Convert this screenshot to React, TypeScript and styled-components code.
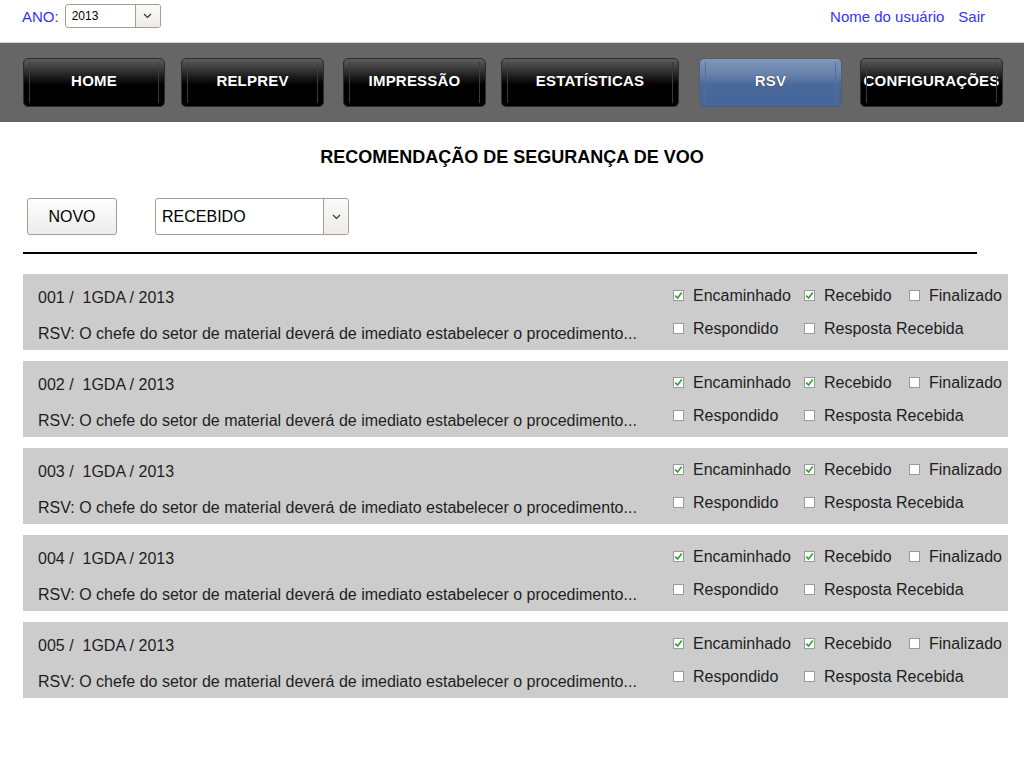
import React from 'react'
import styled, { createGlobalStyle } from 'styled-components'

const GlobalStyle = createGlobalStyle`
    body {
        margin: 0;
        background: #fff;
        font-family: "Liberation Sans", Arial, sans-serif;
    }
`

const menu = [
    { label: 'HOME', width: 142, gap: 0 },
    { label: 'RELPREV', width: 143, gap: 16 },
    { label: 'IMPRESSÃO', width: 143, gap: 19 },
    { label: 'ESTATÍSTICAS', width: 178, gap: 15 },
    { label: 'RSV', width: 143, gap: 20, active: true },
    { label: 'CONFIGURAÇÕES', width: 143, gap: 18 },
]

const records = ['001', '002', '003', '004', '005']

const Page = styled.div`
    width: 1024px;
    min-height: 768px;
`

const TopBar = styled.div`
    height: 42px;
    display: flex;
    align-items: center;
    justify-content: space-between;
    padding: 0 39px 0 22px;
    box-sizing: border-box;
    color: #3333ff;
    font-size: 15px;
`

const YearGroup = styled.div`
    display: flex;
    align-items: center;
    gap: 6px;
    margin-top: -10px;
`

const UserLinks = styled.div`
    display: flex;
    gap: 14px;
    margin-top: -10px;
`

const SelectBox = styled.div<{ $w: number; $h: number; $size: number }>`
    width: ${({ $w }) => $w}px;
    height: ${({ $h }) => $h}px;
    box-sizing: border-box;
    border: 1px solid #a59e92;
    border-radius: 3px;
    background: #fff;
    display: flex;
    color: #000;
    font-size: ${({ $size }) => $size}px;
    overflow: hidden;
`

const SelectValue = styled.div<{ $pad: number }>`
    flex: 1;
    display: flex;
    align-items: center;
    padding-left: ${({ $pad }) => $pad}px;
`

const SelectArrow = styled.div`
    width: 24px;
    border-left: 1px solid #a59e92;
    background: linear-gradient(#fbfaf8, #efece6);
    display: flex;
    align-items: center;
    justify-content: center;
`

const Nav = styled.nav`
    height: 80px;
    background: #666;
    border-top: 1px solid #d4d4d4;
    display: flex;
    align-items: flex-start;
    padding: 15px 0 0 23px;
    box-sizing: border-box;
`

const NavButton = styled.div<{ $w: number; $gap: number; $active?: boolean }>`
    position: relative;
    flex-shrink: 0;
    width: ${({ $w }) => $w}px;
    margin-left: ${({ $gap }) => $gap}px;
    height: 49px;
    box-sizing: border-box;
    border-radius: 5px;
    border: 1px solid ${({ $active }) => ($active ? '#555d6b' : '#2b2b2b')};
    background: ${({ $active }) =>
        $active
            ? 'linear-gradient(#8098bc 0%, #6580aa 35%, #49699b 55%, #46669a 100%)'
            : 'linear-gradient(#5c5c5c 0%, #2a2a2a 30%, #000 55%, #000 100%)'};
    color: #fff;
    font-weight: bold;
    font-size: 15px;
    letter-spacing: 0.2px;
    display: flex;
    justify-content: center;
    padding-top: 13px;
    text-shadow: 0 0 1px #000;
    white-space: nowrap;

    &::before,
    &::after {
        content: '';
        position: absolute;
        top: 3px;
        bottom: 3px;
        width: 1px;
        background: ${({ $active }) => ($active ? '#5a6f91' : '#3a3a3a')};
    }
    &::before { left: 5px; }
    &::after { right: 5px; }
`

const Title = styled.h1`
    margin: 25px 0 0;
    text-align: center;
    font-size: 18px;
    font-weight: bold;
    color: #000;
`

const Toolbar = styled.div`
    display: flex;
    align-items: center;
    gap: 38px;
    margin-top: 30px;
    padding-left: 27px;
`

const NewButton = styled.div`
    width: 90px;
    height: 37px;
    box-sizing: border-box;
    border: 1px solid #a59e92;
    border-radius: 3px;
    background: linear-gradient(#fefefe, #ececec);
    display: flex;
    align-items: center;
    justify-content: center;
    font-size: 16px;
    color: #000;
`

const Divider = styled.hr`
    margin: 17px 0 0 23px;
    width: 954px;
    border: none;
    border-top: 2px solid #000;
`

const List = styled.div`
    display: flex;
    flex-direction: column;
    gap: 11px;
    margin: 20px 0 0 23px;
    width: 985px;
`

const Card = styled.div`
    height: 76px;
    background: #cccccc;
    display: flex;
    justify-content: space-between;
    box-sizing: border-box;
    padding: 5px 0 0 15px;
    color: #1e1e1e;
    font-size: 16px;
`

const Info = styled.div`
    line-height: 36px;
    padding-top: 1px;
`

const Flags = styled.div`
    display: grid;
    grid-template-columns: 131px 105px 92px;
    grid-auto-rows: 33px;
    width: 335px;
`

const Flag = styled.label`
    display: flex;
    align-items: center;
    gap: 9px;
    white-space: nowrap;
`

const Box = styled.span`
    flex-shrink: 0;
    width: 11px;
    height: 11px;
    box-sizing: border-box;
    border: 1px solid #9a9a9a;
    background: #fff;
    display: flex;
    align-items: center;
    justify-content: center;
`

const Arrow = () => (
    <svg width="9" height="6" viewBox="0 0 9 6">
        <path d="M1 1 L4.5 4.5 L8 1" fill="none" stroke="#333" strokeWidth="1.2" />
    </svg>
)

const Check = () => (
    <svg width="9" height="9" viewBox="0 0 9 9">
        <path d="M1.2 4.6 L3.6 7 L7.8 1.6" fill="none" stroke="#2ea12e" strokeWidth="1.6" />
    </svg>
)

const CheckItem: React.FC<{ label: string; checked?: boolean }> = ({ label, checked }) => (
    <Flag>
        <Box>{checked && <Check />}</Box>
        {label}
    </Flag>
)

const App: React.FC = () => {
    return (
        <Page>
            <GlobalStyle />
            <TopBar>
                <YearGroup>
                    ANO:
                    <SelectBox $w={96} $h={24} $size={12}>
                        <SelectValue $pad={6}>2013</SelectValue>
                        <SelectArrow><Arrow /></SelectArrow>
                    </SelectBox>
                </YearGroup>
                <UserLinks>
                    <span>Nome do usuário</span>
                    <span>Sair</span>
                </UserLinks>
            </TopBar>

            <Nav>
                {menu.map((item) => (
                    <NavButton key={item.label} $w={item.width} $gap={item.gap} $active={item.active}>
                        {item.label}
                    </NavButton>
                ))}
            </Nav>

            <Title>RECOMENDAÇÃO DE SEGURANÇA DE VOO</Title>

            <Toolbar>
                <NewButton>NOVO</NewButton>
                <SelectBox $w={194} $h={37} $size={16}>
                    <SelectValue $pad={6}>RECEBIDO</SelectValue>
                    <SelectArrow><Arrow /></SelectArrow>
                </SelectBox>
            </Toolbar>

            <Divider />

            <List>
                {records.map((num) => (
                    <Card key={num}>
                        <Info>
                            <div>{num} /&nbsp; 1GDA / 2013</div>
                            <div>RSV: O chefe do setor de material deverá de imediato estabelecer o procedimento...</div>
                        </Info>
                        <Flags>
                            <CheckItem label="Encaminhado" checked />
                            <CheckItem label="Recebido" checked />
                            <CheckItem label="Finalizado" />
                            <CheckItem label="Respondido" />
                            <CheckItem label="Resposta Recebida" />
                        </Flags>
                    </Card>
                ))}
            </List>
        </Page>
    )
}

export default App
